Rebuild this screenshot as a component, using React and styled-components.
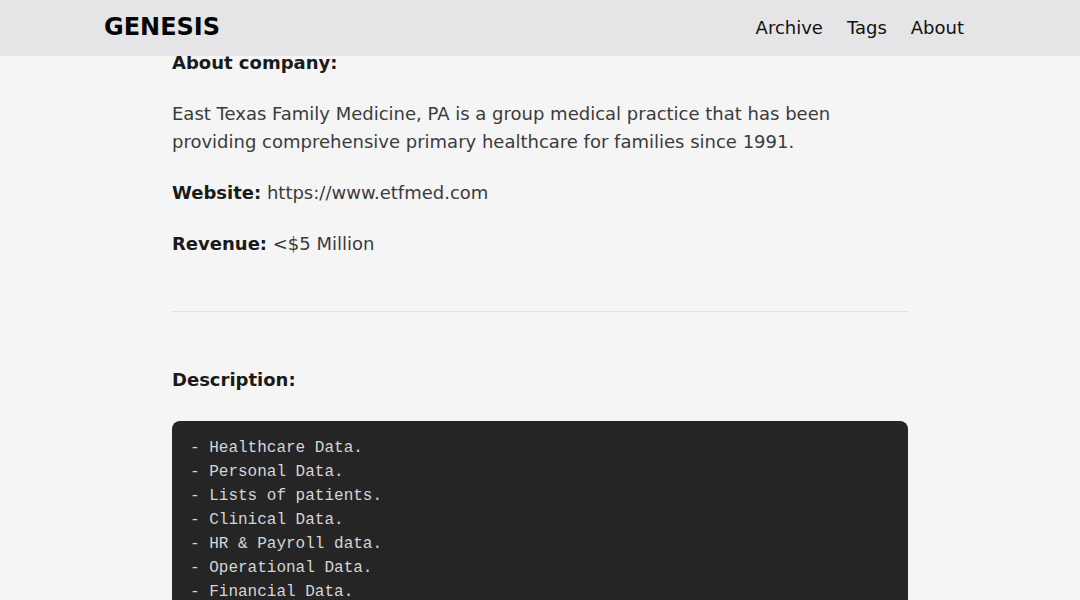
import React from "react";
import styled, { createGlobalStyle } from "styled-components";

const GlobalStyle = createGlobalStyle`
	body {
		margin: 0;
		background: #f5f5f5;
		font-family: "DejaVu Sans", "Noto Sans", sans-serif;
		color: #1e1e1e;
	}
`;

const dataItems = [
	"Healthcare Data.",
	"Personal Data.",
	"Lists of patients.",
	"Clinical Data.",
	"HR & Payroll data.",
	"Operational Data.",
	"Financial Data.",
];

const App = () => {
	return (
		<>
			<GlobalStyle />
			<Header>
				<Logo>GENESIS</Logo>
				<Nav>
					<NavLink href="#">Archive</NavLink>
					<NavLink href="#">Tags</NavLink>
					<NavLink href="#">About</NavLink>
				</Nav>
			</Header>
			<Main>
				<Heading>About company:</Heading>
				<Paragraph>
					East Texas Family Medicine, PA is a group medical practice that has been
					providing comprehensive primary healthcare for families since 1991.
				</Paragraph>
				<Paragraph>
					<Label>Website:</Label> https://www.etfmed.com
				</Paragraph>
				<Paragraph>
					<Label>Revenue:</Label> &lt;$5 Million
				</Paragraph>
				<Divider />
				<Heading $compact>Description:</Heading>
				<CodeBlock>
					{dataItems.map((item) => (
						<CodeLine key={item}>- {item}</CodeLine>
					))}
				</CodeBlock>
			</Main>
		</>
	);
};

export default App;

const Header = styled.header`
	position: fixed;
	top: 0;
	left: 0;
	right: 0;
	z-index: 10;
	height: 56px;
	display: flex;
	align-items: center;
	justify-content: space-between;
	padding: 0 116px 0 104px;
	background: #e5e5e7;
`;

const Logo = styled.a`
	font-size: 24px;
	font-weight: 700;
	color: #050505;
	text-decoration: none;
	margin-top: -2px;
`;

const Nav = styled.nav`
	display: flex;
	gap: 24px;
`;

const NavLink = styled.a`
	font-size: 18px;
	color: #111;
	text-decoration: none;
	margin-top: -2px;
`;

const Main = styled.main`
	max-width: 736px;
	margin: 0 auto;
	padding-top: 49px;
`;

const Heading = styled.h3`
	margin: 0 0 ${(p) => (p.$compact ? "27px" : "23px")};
	font-size: 18px;
	line-height: 28px;
	font-weight: 700;
	color: #1a1a1a;
`;

const Paragraph = styled.p`
	margin: 0 0 23px;
	font-size: 18px;
	line-height: 28px;
	color: #3b3b3b;
`;

const Label = styled.strong`
	color: #1a1a1a;
	font-weight: 700;
`;

const Divider = styled.hr`
	border: none;
	border-top: 1px solid #e3e3e3;
	margin: 53px 0 54px;
`;

const CodeBlock = styled.pre`
	margin: 0;
	padding: 15px 18px 13px;
	background: #252526;
	border-radius: 8px;
	font-family: "Liberation Mono", "DejaVu Sans Mono", monospace;
	font-size: 16px;
	line-height: 24px;
	color: #d5d5d6;
`;

const CodeLine = styled.div``;
